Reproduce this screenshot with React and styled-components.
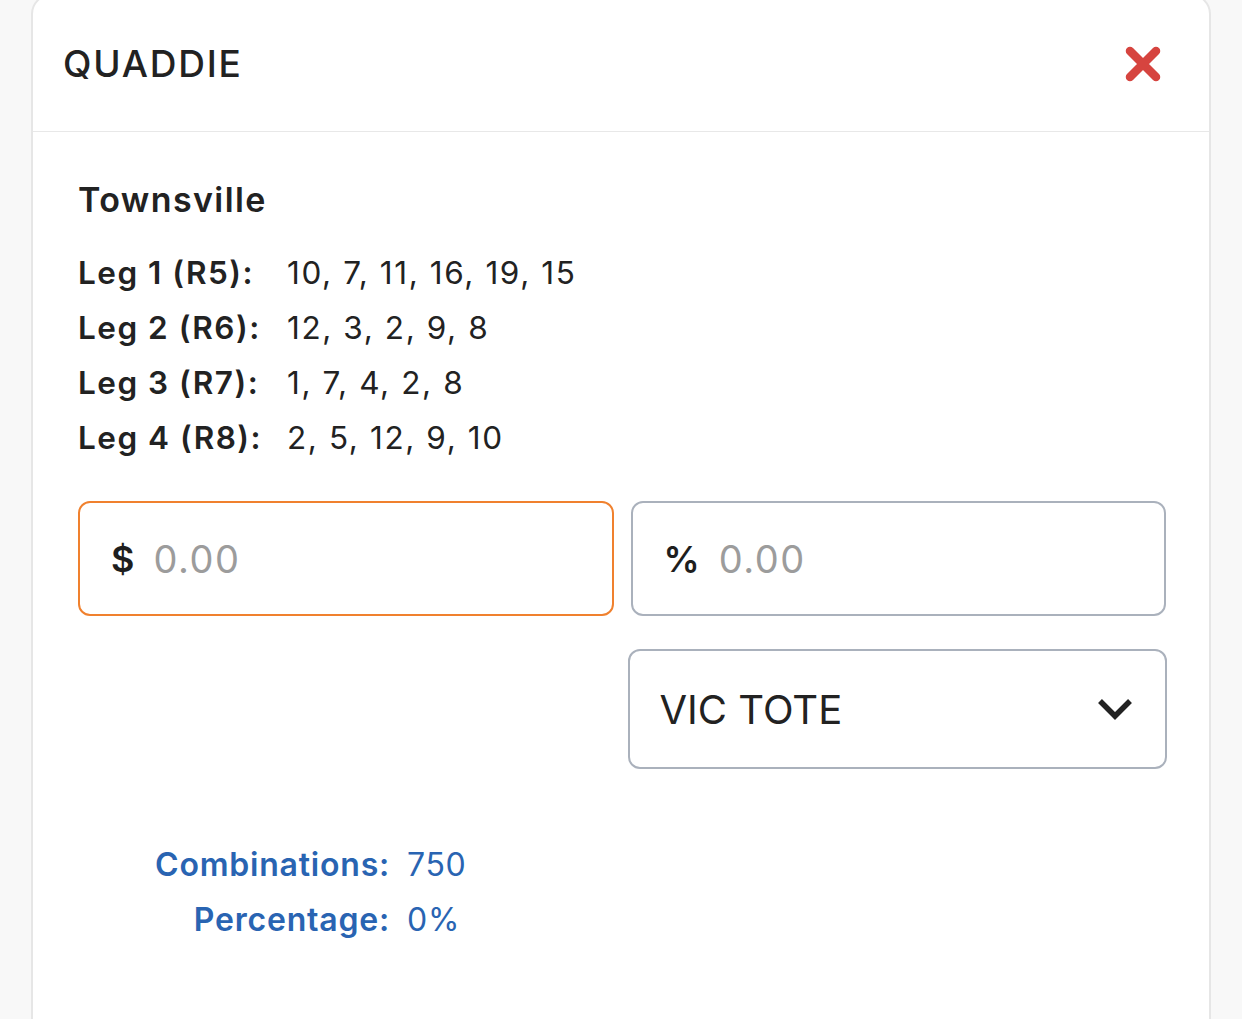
import React from "react";
import styled, { createGlobalStyle } from "styled-components";

const Global = createGlobalStyle`
  html, body { margin: 0; padding: 0; background: #f8f8f8; }
  body { font-family: Inter, "Open Sans", "Liberation Sans", sans-serif; color: #222; overflow: hidden; }
  * { box-sizing: border-box; }
`;

const Page = styled.div`
  padding: 0 31px;
  height: 1019px;
  overflow: hidden;
`;

const Card = styled.div`
  margin-top: -6px;
  background: #fff;
  border: 2px solid #e6e6e6;
  border-radius: 20px;
  min-height: 1100px;
`;

const Header = styled.div`
  height: 136px;
  display: flex;
  align-items: center;
  justify-content: space-between;
  padding: 0 47px 0 30px;
  border-bottom: 1.5px solid #e8e8e8;
`;

const Title = styled.h1`
  margin: 0;
  font-size: 37px;
  font-weight: 500;
  letter-spacing: 1.8px;
  color: #222;
`;

const CloseButton = styled.button`
  border: 0;
  background: none;
  padding: 0;
  display: flex;
  cursor: pointer;
`;

const Body = styled.div`
  padding: 48px 43px 0 45px;
`;

const Venue = styled.h2`
  margin: 0;
  font-size: 34px;
  line-height: 40px;
  font-weight: 600;
  letter-spacing: 1.4px;
  color: #222;
`;

const Legs = styled.div`
  margin-top: 25px;
  display: grid;
  grid-template-columns: 209px 1fr;
  font-size: 31.5px;
  line-height: 55px;
  color: #222;
`;

const LegLabel = styled.span`
  font-weight: 600;
  letter-spacing: 1.5px;
`;

const LegValue = styled.span`
  font-weight: 400;
  letter-spacing: 1.6px;
`;

const Form = styled.div`
  margin-top: 36px;
  display: grid;
  grid-template-columns: minmax(0, 1fr) minmax(0, 1fr);
  column-gap: 17px;
  row-gap: 33px;
`;

const InputBox = styled.label`
  height: 115px;
  display: flex;
  align-items: center;
  gap: 19px;
  padding: 0 20px 0 31px;
  border: 2px solid ${(p) => (p.$focused ? "#f0812e" : "#aab1bc")};
  border-radius: 12px;
  background: #fff;
`;

const Prefix = styled.span`
  font-size: 36px;
  font-weight: 600;
  color: #1e1e1e;
`;

const Field = styled.input`
  flex: 1;
  width: 100%;
  min-width: 0;
  border: 0;
  outline: none;
  font-family: inherit;
  font-size: 38px;
  font-weight: 400;
  letter-spacing: 1.5px;
  color: #222;
  padding: 0;
  background: transparent;
  &::placeholder { color: #9c9c9c; }
`;

const SelectBox = styled.button`
  grid-column: 2;
  margin: 0 -1px 0 -3px;
  height: 120px;
  display: flex;
  align-items: center;
  justify-content: space-between;
  padding: 0 31px 0 30px;
  border: 2px solid #aab1bc;
  border-radius: 12px;
  background: #fff;
  font-family: inherit;
  font-size: 40px;
  font-weight: 400;
  color: #222;
  cursor: pointer;
`;

const Summary = styled.div`
  margin-top: 68px;
  margin-left: 77px;
  display: grid;
  grid-template-columns: auto auto;
  justify-content: start;
  column-gap: 17px;
  font-size: 32px;
  line-height: 55px;
  color: #2964b2;
`;

const SumLabel = styled.span`
  text-align: right;
  font-weight: 600;
  letter-spacing: 0.8px;
`;

const SumValue = styled.span`
  font-weight: 400;
  letter-spacing: 0.6px;
`;

const legs = [
  ["Leg 1 (R5):", "10, 7, 11, 16, 19, 15"],
  ["Leg 2 (R6):", "12, 3, 2, 9, 8"],
  ["Leg 3 (R7):", "1, 7, 4, 2, 8"],
  ["Leg 4 (R8):", "2, 5, 12, 9, 10"],
];

export default function App() {
  return (
    <Page>
      <Global />
      <Card>
        <Header>
          <Title>QUADDIE</Title>
          <CloseButton aria-label="Close">
            <svg width="38" height="38" viewBox="0 0 38 38">
              <path d="M6 6 L32 32 M32 6 L6 32" stroke="#d6443f" strokeWidth="8.5" strokeLinecap="round" fill="none" />
            </svg>
          </CloseButton>
        </Header>
        <Body>
          <Venue>Townsville</Venue>
          <Legs>
            {legs.map(([l, v]) => (
              <React.Fragment key={l}>
                <LegLabel>{l}</LegLabel>
                <LegValue>{v}</LegValue>
              </React.Fragment>
            ))}
          </Legs>
          <Form>
            <InputBox $focused>
              <Prefix>$</Prefix>
              <Field placeholder="0.00" />
            </InputBox>
            <InputBox>
              <Prefix>%</Prefix>
              <Field placeholder="0.00" />
            </InputBox>
            <SelectBox>
              <span>VIC TOTE</span>
              <svg width="38" height="26" viewBox="0 0 38 26">
                <path d="M4 5 L19 20 L34 5" stroke="#222" strokeWidth="5.5" fill="none" />
              </svg>
            </SelectBox>
          </Form>
          <Summary>
            <SumLabel>Combinations:</SumLabel>
            <SumValue>750</SumValue>
            <SumLabel>Percentage:</SumLabel>
            <SumValue>0%</SumValue>
          </Summary>
        </Body>
      </Card>
    </Page>
  );
}
